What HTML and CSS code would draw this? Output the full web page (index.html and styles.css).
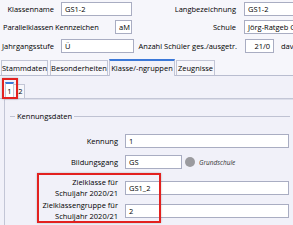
FILE: index.html
```html
<!DOCTYPE html>
<html>
<head>
<meta charset="utf-8">
<link rel="stylesheet" href="styles.css">
</head>
<body>
<div class="top">
  <div class="row r1">
    <span class="lbl w54">Klassenname</span>
    <span class="inp w71">GS1-2</span>
    <span class="lbl w104">Langbezeichnung</span>
    <span class="inp w60">GS1-2</span>
  </div>
  <div class="row r2">
    <span class="lbl wide">Parallelklassen Kennzeichen</span>
    <span class="inp w17">aM</span>
    <span class="lbl w104">Schule</span>
    <span class="inp w60">Jörg-Ratgeb G</span>
  </div>
  <div class="row r3">
    <span class="lbl w54">Jahrgangsstufe</span>
    <span class="inp w73">Ü</span>
    <span class="lbl w103">Anzahl Schüler ges./ausgetr.</span>
    <span class="inp w29 right">21/0</span>
    <span class="after">dav</span>
  </div>
</div>
<div class="tabs">
  <span class="tab t1">Stammdaten</span>
  <span class="tab t2">Besonderheiten</span>
  <span class="tab t3 active">Klasse/-ngruppen</span>
  <span class="tab t4">Zeugnisse</span>
</div>
<div class="panel">
  <div class="subtabs">
    <span class="stab s1 active">1</span>
    <span class="stab s2">2</span>
  </div>
  <div class="page">
    <div class="group">
      <span class="gline short"></span>
      <span class="gtitle">Kennungsdaten</span>
      <span class="gline long"></span>
    </div>
    <div class="frow f1">
      <span class="flbl">Kennung</span>
      <span class="inp fin">1</span>
    </div>
    <div class="frow f2">
      <span class="flbl">Bildungsgang</span>
      <span class="inp gs">GS</span>
      <span class="dot"></span>
      <span class="hint">Grundschule</span>
    </div>
    <div class="frow f3">
      <span class="flbl two">Zielklasse für<br>Schuljahr 2020/21</span>
      <span class="inp fin">GS1_2</span>
    </div>
    <div class="frow f4">
      <span class="flbl two">Zielklassengruppe für<br>Schuljahr 2020/21</span>
      <span class="inp fin">2</span>
    </div>
  </div>
</div>
<div class="mark m1"></div>
<div class="mark m2"></div>
</body>
</html>
```
FILE: styles.css
```css
html, body {
  margin: 0;
  padding: 0;
}
body {
  width: 293px;
  height: 225px;
  overflow: hidden;
  position: relative;
  background: #f6f6fb;
  font-family: "Open Sans", "Noto Sans", sans-serif;
  font-size: 7.5px;
  color: #000;
}
.top {
  padding-top: 2px;
}
.row {
  display: flex;
  align-items: center;
  height: 14px;
  white-space: nowrap;
}
.r2 { margin-top: 4px; padding-left: 3px; }
.r3 { margin-top: 5px; }
.lbl { display: block; flex: none; }
.w54 { width: 54px; text-align: right; margin-right: 7px; }
.w104 { width: 104px; text-align: right; margin-right: 8px; }
.w103 { width: 103px; text-align: right; margin-right: 8px; }
.wide { width: 112px; letter-spacing: -0.1px; }
.inp {
  display: block;
  flex: none;
  box-sizing: border-box;
  height: 14px;
  line-height: 12px;
  padding: 0 3px;
  background: #fff;
  border: 1px solid #a9adc2;
  overflow: hidden;
  white-space: nowrap;
}
.w71 { width: 71px; }
.w60 { width: 60px; }
.w17 { width: 17px; }
.w73 { width: 73px; }
.w29 { width: 29px; }
.right { text-align: right; }
.after { margin-left: 7px; }

.tabs {
  display: flex;
  align-items: flex-end;
  height: 17px;
  margin-top: 6px;
  box-sizing: border-box;
  border-bottom: 1px solid #b9bdd0;
  padding-left: 1px;
}
.tab {
  box-sizing: border-box;
  height: 15px;
  line-height: 14px;
  border: 1px solid #c3c6d6;
  border-bottom: none;
  background: #f7f7fb;
  text-align: center;
  white-space: nowrap;
}
.t1 { width: 47px; margin-right: 2px; }
.t2 { width: 58px; margin-right: 1px; }
.t3 { width: 66px; margin-right: 1px; }
.t4 { width: 39px; }
.tab.active {
  height: 17px;
  margin-bottom: -1px;
  border-top: 2px solid #3b78d8;
  background: #f1f1f9;
  line-height: 14px;
}
.panel {
  background: #f1f1f9;
  height: 150px;
}
.subtabs {
  display: flex;
  align-items: flex-end;
  height: 23px;
  box-sizing: border-box;
  padding-left: 5px;
  border-bottom: 1px solid #c3c6d6;
}
.stab {
  box-sizing: border-box;
  height: 14px;
  line-height: 13px;
  border: 1px solid #c3c6d6;
  border-bottom: none;
  background: #f7f7fb;
  text-align: center;
}
.s1 { width: 9px; }
.s2 { width: 11px; border-left: none; padding-left: 3px; }
.stab.active {
  height: 17px;
  margin-bottom: -1px;
  border-top: 2px solid #3b78d8;
  background: #fff;
  line-height: 15px;
}
.page {
  margin-left: 4px;
  border-left: 1px solid #c3c6d6;
  border-top: 1px solid #dcdeea;
  height: 130px;
  padding-top: 11px;
  box-sizing: border-box;
}
.group {
  display: flex;
  align-items: center;
  height: 10px;
}
.gline {
  display: block;
  height: 1px;
  background: #bfc2d2;
}
.short { width: 5px; margin-left: 5px; }
.long { width: 216px; }
.gtitle { margin: 0 2px; }
.frow {
  display: flex;
  align-items: center;
  white-space: nowrap;
}
.flbl {
  display: block;
  width: 113px;
  margin-right: 7px;
  text-align: right;
  flex: none;
}
.flbl.two { line-height: 10.5px; }
.fin { width: 164px; }
.f1 { margin-top: 13px; }
.f2 { margin-top: 7px; }
.f3 { margin-top: 8px; }
.f4 { margin-top: 2px; }
.gs { width: 57px; }
.dot {
  display: block;
  width: 10px;
  height: 10px;
  border-radius: 50%;
  background: #9b9b9f;
  margin-left: 3px;
  margin-right: 4px;
}
.hint {
  font-style: italic;
  font-size: 6.5px;
  color: #333;
}
.mark {
  position: absolute;
  border: 2px solid #e3211f;
  box-sizing: border-box;
  box-shadow: 0 0 2px rgba(0,0,0,0.25);
}
.m1 { left: 2px; top: 78px; width: 16px; height: 21px; }
.m2 { left: 37px; top: 173px; width: 124px; height: 50px; }
```
